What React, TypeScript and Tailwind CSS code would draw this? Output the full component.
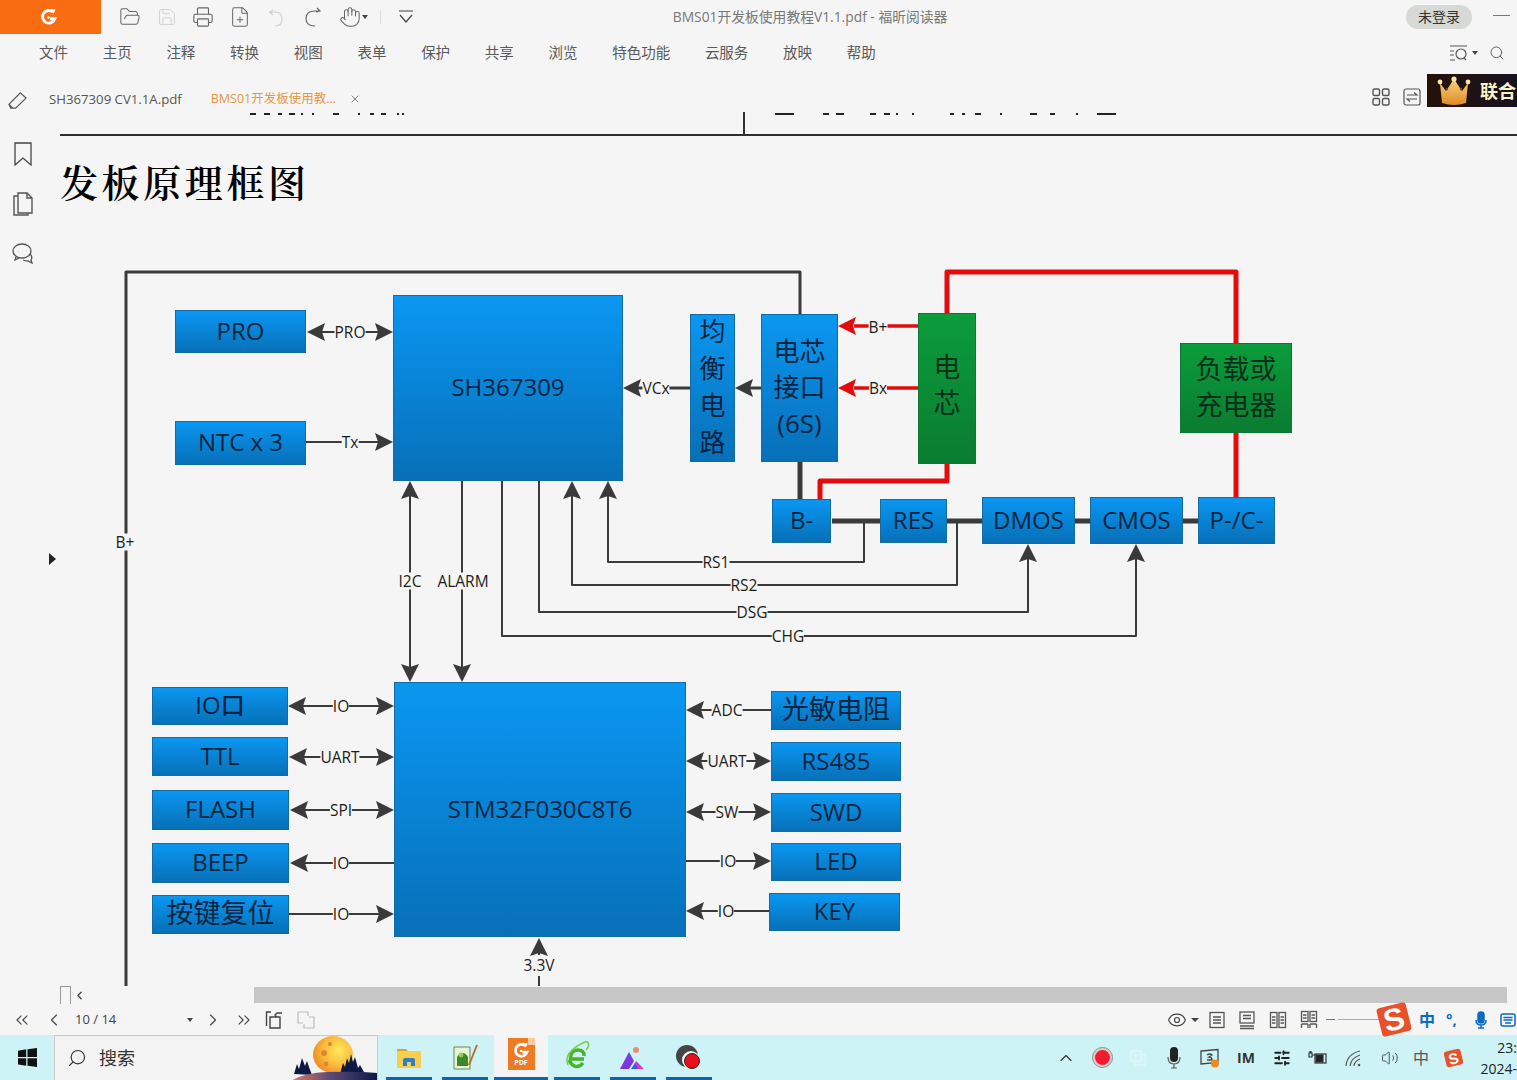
import React from "react";
import {
  FolderOpen, Save, Printer, FilePlus, Hand, ChevronLeft, ChevronRight, ChevronsLeft, ChevronsRight, Eye, ChevronUp, Search, SlidersHorizontal, Volume2, X,
} from "lucide-react";

const FONT = "font-['Open_Sans','Noto_Sans_CJK_SC',sans-serif]";

function Head({ x, y, dir, red }: { x: number; y: number; dir: "l" | "r" | "u" | "d"; red?: boolean }) {
  const rot = { r: 0, d: 90, l: 180, u: 270 }[dir];
  return <polygon points="0,0 -18,-9 -15,0 -18,9" fill={red ? "#e30b0b" : "#3a3a3a"} transform={`translate(${x} ${y}) rotate(${rot})`} />;
}

function L({ d, w = 2, c = "#3a3a3a" }: { d: string; w?: number; c?: string }) {
  return <path d={d} fill="none" stroke={c} strokeWidth={w} strokeLinejoin="round" />;
}

function Wires() {
  return (
    <svg viewBox="46 112 1471 874" className="absolute inset-0 w-[1471px] h-[874px]">
      {/* clipped strokes of the page above */}
      <g fill="#222">
        {[[250, 6], [264, 6], [278, 4], [289, 6], [301, 2], [312, 2], [333, 6], [358, 2], [370, 4], [381, 5], [397, 2], [402, 2], [775, 19], [823, 6], [836, 8], [870, 6], [884, 6], [896, 2], [912, 2], [950, 4], [962, 3], [975, 6], [1000, 2], [1030, 7], [1050, 5], [1076, 2], [1097, 19]].map(([x, w]) => (
          <rect key={x} x={x} y={113} width={w} height={2} />
        ))}
      </g>
      <L d="M60 135H1517" w={2} c="#2e2e2e" />
      <L d="M744 112V135" w={2} c="#2e2e2e" />

      {/* supply loop */}
      <L d="M126 986V272H800V314" w={3} />
      <L d="M800 462V499" w={5} />
      <L d="M832 521H880M947 521H982M1075 521H1090M1183 521H1198" w={5} />

      {/* red power */}
      <L d="M947 313V272H1236V343" w={5} c="#e30b0b" />
      <L d="M1236 433V497" w={5} c="#e30b0b" />
      <L d="M947 464V481H820V499" w={5} c="#e30b0b" />
      <L d="M854 326H918M854 388H918" w={3.5} c="#e30b0b" />
      <Head x={838} y={326} dir="l" red />
      <Head x={838} y={388} dir="l" red />

      {/* balance */}
      <L d="M636 388H690M750 388H761" w={3} />
      <Head x={623} y={388} dir="l" />
      <Head x={735} y={388} dir="l" />

      {/* SH367309 left */}
      <L d="M320 332H380" />
      <Head x={307} y={332} dir="l" />
      <Head x={393} y={332} dir="r" />
      <L d="M306 442H380" />
      <Head x={393} y={442} dir="r" />

      {/* sense lines */}
      <L d="M864 521V562H608V495" />
      <Head x={608} y={481} dir="u" />
      <L d="M957 521V585H572V495" />
      <Head x={572} y={481} dir="u" />
      <L d="M539 481V612H1028V558" />
      <Head x={1028} y={544} dir="u" />
      <L d="M502 481V636H1136V558" />
      <Head x={1136} y={544} dir="u" />

      {/* buses */}
      <L d="M410 495V668" />
      <Head x={410} y={481} dir="u" />
      <Head x={410} y={682} dir="d" />
      <L d="M462 481V668" />
      <Head x={462} y={682} dir="d" />

      {/* STM32 left */}
      <L d="M302 706H380" />
      <Head x={288} y={706} dir="l" />
      <Head x={394} y={706} dir="r" />
      <L d="M302 757H380" />
      <Head x={289} y={757} dir="l" />
      <Head x={394} y={757} dir="r" />
      <L d="M302 810H380" />
      <Head x={290} y={810} dir="l" />
      <Head x={394} y={810} dir="r" />
      <L d="M302 863H394" />
      <Head x={290} y={863} dir="l" />
      <L d="M289 914H380" />
      <Head x={394} y={914} dir="r" />

      {/* STM32 right */}
      <L d="M700 710H771" />
      <Head x={686} y={710} dir="l" />
      <L d="M700 761H757" />
      <Head x={686} y={761} dir="l" />
      <Head x={771} y={761} dir="r" />
      <L d="M700 812H757" />
      <Head x={686} y={812} dir="l" />
      <Head x={771} y={812} dir="r" />
      <L d="M686 861H757" />
      <Head x={771} y={861} dir="r" />
      <L d="M700 911H769" />
      <Head x={686} y={911} dir="l" />

      {/* 3.3V */}
      <Head x={539} y={938} dir="u" />
      <L d="M539 950V955M539 976V986" />
    </svg>
  );
}

function Tag({ className, children }: { className: string; children: React.ReactNode }) {
  return (
    <span className={`absolute -translate-x-1/2 -translate-y-1/2 bg-[#f5f5f5] text-[15.5px] leading-[17px] text-[#1c1c1c] whitespace-nowrap ${className}`}>
      {children}
    </span>
  );
}

const BOX = "absolute flex items-center justify-center text-center pb-[2px] whitespace-nowrap";
const BLUE = `${BOX} border border-[#136ba3] bg-gradient-to-b from-[#0a97f2] to-[#0770b8] text-[#072540]`;
const GREEN = `${BOX} border border-[#0c7a34] bg-gradient-to-b from-[#0b9c3c] to-[#0a7c30] text-[#06301a]`;

function Diagram() {
  return (
    <div className="relative flex-1 min-w-0 overflow-hidden">
      <Wires />
      <h1 className="absolute left-[14px] top-[46px] text-[38px] leading-[46px] tracking-[3.6px] font-semibold text-black whitespace-nowrap font-['Noto_Serif_CJK_SC','Noto_Sans_CJK_SC',serif]">发板原理框图</h1>
      <span className="absolute left-[3px] top-[441px] border-y-[6px] border-l-[7px] border-y-transparent border-l-[#222]" />

      <div className={`${BLUE} font-medium left-[129px] top-[198px] w-[131px] h-[43px] text-[24px]`}>PRO</div>
      <div className={`${BLUE} font-medium left-[129px] top-[309px] w-[131px] h-[44px] text-[24px]`}>NTC x 3</div>
      <div className={`${BLUE} font-medium left-[347px] top-[183px] w-[230px] h-[186px] text-[24px]`}>SH367309</div>
      <div className={`${BLUE} left-[644px] top-[202px] w-[45px] h-[148px] text-[26px] leading-[37px] flex-col`}>
        <span>均</span><span>衡</span><span>电</span><span>路</span>
      </div>
      <div className={`${BLUE} left-[715px] top-[202px] w-[77px] h-[148px] text-[26px] leading-[36px] flex-col`}>
        <span>电芯</span><span>接口</span><span>(6S)</span>
      </div>
      <div className={`${GREEN} left-[872px] top-[201px] w-[58px] h-[151px] text-[27px] leading-[36px] flex-col pb-[8px]`}>
        <span>电</span><span>芯</span>
      </div>
      <div className={`${GREEN} left-[1134px] top-[231px] w-[112px] h-[90px] text-[27px] leading-[36px] flex-col`}>
        <span>负载或</span><span>充电器</span>
      </div>
      <div className={`${BLUE} font-medium left-[726px] top-[387px] w-[59px] h-[44px] text-[24px]`}>B-</div>
      <div className={`${BLUE} font-medium left-[834px] top-[387px] w-[67px] h-[44px] text-[24px]`}>RES</div>
      <div className={`${BLUE} font-medium left-[936px] top-[385px] w-[93px] h-[47px] text-[24px]`}>DMOS</div>
      <div className={`${BLUE} font-medium left-[1044px] top-[385px] w-[93px] h-[47px] text-[24px]`}>CMOS</div>
      <div className={`${BLUE} font-medium left-[1152px] top-[385px] w-[77px] h-[47px] text-[24px]`}>P-/C-</div>
      <div className={`${BLUE} font-medium left-[348px] top-[570px] w-[292px] h-[255px] text-[24px]`}>STM32F030C8T6</div>

      <div className={`${BLUE} font-medium left-[106px] top-[575px] w-[136px] h-[38px] text-[24px]`}>IO口</div>
      <div className={`${BLUE} font-medium left-[106px] top-[625px] w-[136px] h-[39px] text-[24px]`}>TTL</div>
      <div className={`${BLUE} font-medium left-[106px] top-[678px] w-[137px] h-[40px] text-[24px]`}>FLASH</div>
      <div className={`${BLUE} font-medium left-[106px] top-[731px] w-[137px] h-[40px] text-[24px]`}>BEEP</div>
      <div className={`${BLUE} left-[106px] top-[783px] w-[137px] h-[39px] text-[27px]`}>按键复位</div>
      <div className={`${BLUE} left-[725px] top-[579px] w-[130px] h-[39px] text-[27px]`}>光敏电阻</div>
      <div className={`${BLUE} font-medium left-[725px] top-[630px] w-[130px] h-[39px] text-[24px]`}>RS485</div>
      <div className={`${BLUE} font-medium left-[725px] top-[681px] w-[130px] h-[39px] text-[24px]`}>SWD</div>
      <div className={`${BLUE} font-medium left-[725px] top-[731px] w-[130px] h-[38px] text-[24px]`}>LED</div>
      <div className={`${BLUE} font-medium left-[723px] top-[781px] w-[131px] h-[38px] text-[24px]`}>KEY</div>

      <Tag className="left-[79px] top-[430px]">B+</Tag>
      <Tag className="left-[304px] top-[220px]">PRO</Tag>
      <Tag className="left-[304px] top-[330px]">Tx</Tag>
      <Tag className="left-[610px] top-[276px]">VCx</Tag>
      <Tag className="left-[832px] top-[215px]">B+</Tag>
      <Tag className="left-[832px] top-[276px]">Bx</Tag>
      <Tag className="left-[670px] top-[450px]">RS1</Tag>
      <Tag className="left-[698px] top-[473px]">RS2</Tag>
      <Tag className="left-[706px] top-[500px]">DSG</Tag>
      <Tag className="left-[742px] top-[524px]">CHG</Tag>
      <Tag className="left-[364px] top-[469px]">I2C</Tag>
      <Tag className="left-[417px] top-[469px]">ALARM</Tag>
      <Tag className="left-[295px] top-[594px]">IO</Tag>
      <Tag className="left-[294px] top-[645px]">UART</Tag>
      <Tag className="left-[295px] top-[698px]">SPI</Tag>
      <Tag className="left-[295px] top-[751px]">IO</Tag>
      <Tag className="left-[295px] top-[802px]">IO</Tag>
      <Tag className="left-[681px] top-[598px]">ADC</Tag>
      <Tag className="left-[681px] top-[649px]">UART</Tag>
      <Tag className="left-[681px] top-[700px]">SW</Tag>
      <Tag className="left-[682px] top-[749px]">IO</Tag>
      <Tag className="left-[680px] top-[799px]">IO</Tag>
      <Tag className="left-[493px] top-[853px]">3.3V</Tag>
    </div>
  );
}

function FoxitLogo({ className }: { className: string }) {
  return (
    <svg viewBox="0 0 20 20" className={className}>
      <path d="M14.5 4.5A7 7 0 1 0 16.5 12H11" fill="none" stroke="#fff" strokeWidth="3.2" />
      <path d="M11 1l6.5 .5-2.5 5z" fill="#fff" />
      <circle cx="9.5" cy="10.5" r="1.4" fill="#fff" />
    </svg>
  );
}

function Crown() {
  return (
    <svg viewBox="0 0 34 30" className="w-[34px] h-[30px]">
      <defs>
        <linearGradient id="cr" x1="0" y1="0" x2="0" y2="1">
          <stop offset="0" stopColor="#f8d27a" />
          <stop offset="1" stopColor="#e08a28" />
        </linearGradient>
      </defs>
      <path d="M3 7l6 8 8-12 8 12 6-8-2 20Q17 31 5 27z" fill="url(#cr)" />
      <circle cx="3" cy="6" r="2.4" fill="#fbe3a8" />
      <circle cx="17" cy="3" r="2.6" fill="#fbe3a8" />
      <circle cx="31" cy="6" r="2.4" fill="#fbe3a8" />
      <circle cx="10" cy="13" r="1.2" fill="#7a4a14" />
      <circle cx="24" cy="13" r="1.2" fill="#7a4a14" />
    </svg>
  );
}

function Sogou({ className }: { className: string }) {
  return (
    <span className={`flex items-center justify-center rounded-[3px] -rotate-[14deg] bg-[#e8512a] text-white font-black leading-none font-['Liberation_Sans',sans-serif] ${className}`}>S</span>
  );
}

function PageIcon({ kind }: { kind: number }) {
  return (
    <svg viewBox="0 0 20 20" className="w-5 h-5" fill="none" stroke="#555" strokeWidth="1.3">
      {kind === 0 && <><rect x="3" y="2.5" width="14" height="15" /><path d="M6 7h8M6 10h8M6 13h8" /></>}
      {kind === 1 && <><rect x="3" y="2" width="14" height="11" /><path d="M6 5.5h8M6 8.5h8M3 16h14M3 18.5h14" /></>}
      {kind === 2 && <><rect x="2.5" y="2.5" width="6.5" height="15" /><rect x="11" y="2.5" width="6.5" height="15" /><path d="M4 7h3.5M4 10h3.5M4 13h3.5M12.5 7H16M12.5 10H16M12.5 13H16" /></>}
      {kind === 3 && <><rect x="2.5" y="1.5" width="6.5" height="10" /><rect x="11" y="1.5" width="6.5" height="10" /><path d="M4 5h3.5M4 8h3.5M12.5 5H16M12.5 8H16M2.5 14h6.5M11 14h6.5M2.5 14v4M9 14v4M11 14v4M17.5 14v4" /></>}
    </svg>
  );
}

function TitleBar() {
  const ic = "w-[22px] h-[22px] shrink-0 text-[#666]";
  return (
    <div className="h-[34px] flex items-start shrink-0">
      <div className="w-[101px] h-[34px] bg-[#f96c12] flex items-center justify-center pr-[3px]"><FoxitLogo className="w-[18px] h-[18px]" /></div>
      <div className="flex items-center gap-[14.6px] pl-[18px] h-[34px]">
        <FolderOpen className={ic} strokeWidth={1.1} />
        <Save className="w-[20px] h-[20px] shrink-0 mx-[1px] text-[#d0d0d0]" strokeWidth={1.1} />
        <Printer className={ic} strokeWidth={1.2} />
        <FilePlus className={ic} strokeWidth={1.1} />
        <svg viewBox="0 0 22 22" className="w-[22px] h-[22px] shrink-0" fill="none" stroke="#d0d0d0" strokeWidth="1.2"><path d="M8 4L4.5 6 8 9M5 6h5q7 0 7 7t-7 7" /></svg>
        <svg viewBox="0 0 22 22" className="w-[22px] h-[22px] shrink-0" fill="none" stroke="#666" strokeWidth="1.2"><path d="M15 2l3 3-4 1M18 5h-5Q4 5 4 12.500T13 20" /></svg>
        <span className="flex items-center w-[22px]">
          <Hand className={ic} strokeWidth={1.1} />
          <span className="shrink-0 ml-[1px] border-x-[3.5px] border-t-[4px] border-x-transparent border-t-[#444]" />
        </span>
        <span className="w-px h-[14px] bg-[#ddd] ml-[5px]" />
        <svg viewBox="0 0 16 16" className="w-[16px] h-[16px] shrink-0 ml-[2px]" fill="none" stroke="#444" strokeWidth="1.2"><path d="M1 2h14M2 6l6 7 6-7" /></svg>
      </div>
      <div className="h-[34px] ml-[259px] flex items-center text-[13.8px] text-[#777] whitespace-nowrap">BMS01开发板使用教程V1.1.pdf - 福昕阅读器</div>
      <div className="ml-auto mt-[5px] w-[66px] h-[24px] pb-[2px] rounded-full bg-[#d6d9d6] flex items-center justify-center text-[14px] text-[#333]">未登录</div>
      <div className="ml-[21px] mr-[7px] mt-[15px] w-[17px] h-px bg-[#777]" />
    </div>
  );
}

function MenuBar() {
  const items = ["文件", "主页", "注释", "转换", "视图", "表单", "保护", "共享", "浏览", "特色功能", "云服务", "放映", "帮助"];
  return (
    <div className="h-[38px] shrink-0 flex items-center pl-[39px] pb-[1px] gap-[34.7px] text-[14.5px] text-[#5a5a5a]">
      {items.map((t) => <span key={t} className="whitespace-nowrap">{t}</span>)}
      <span className="ml-auto flex items-center text-[#555]">
        <svg viewBox="0 0 20 18" className="w-[20px] h-[18px]" fill="none" stroke="#555" strokeWidth="1.2">
          <path d="M1 2h17M1 7h4M1 11h4M1 16h5" /><circle cx="12" cy="10" r="5" /><path d="M15 14l2 2" />
        </svg>
        <span className="ml-[3px] border-x-[3.5px] border-t-[4px] border-x-transparent border-t-[#444]" />
        <Search className="ml-[11px] mr-[12px] w-[16px] h-[16px]" strokeWidth={1.4} />
      </span>
    </div>
  );
}

function TabBar() {
  return (
    <div className="h-[40px] shrink-0 flex items-start">
      <svg viewBox="0 0 20 20" className="ml-[8px] mt-[19px] w-[19px] h-[19px] shrink-0" fill="none" stroke="#555" strokeWidth="1.3">
        <path d="M13 2l6 5.500L8 18H3l-2-4zM1 14l4 4" />
      </svg>
      <span className="ml-[22px] mt-[18px] text-[13.2px] leading-[18px] text-[#555] whitespace-nowrap">SH367309 CV1.1A.pdf</span>
      <span className="ml-[29px] mt-[18px] text-[12.5px] leading-[18px] text-[#e8973f] whitespace-nowrap">BMS01开发板使用教...</span>
      <X className="ml-[13px] mt-[21px] w-[12px] h-[12px] text-[#555]" strokeWidth={1.5} />
      <span className="ml-auto mt-[16px] flex items-center">
        <svg viewBox="0 0 18 18" className="w-[18px] h-[18px]" fill="none" stroke="#555" strokeWidth="1.4">
          <rect x="1" y="1" width="6.5" height="6.5" rx="1.5" /><rect x="10.5" y="1" width="6.5" height="6.5" rx="1.5" />
          <rect x="1" y="10.5" width="6.5" height="6.5" rx="1.5" /><rect x="10.5" y="10.5" width="6.5" height="6.5" rx="1.5" />
        </svg>
        <svg viewBox="0 0 18 18" className="ml-[13px] w-[18px] h-[18px]" fill="none" stroke="#555" strokeWidth="1.2">
          <rect x="1" y="1" width="16" height="16" rx="2" /><path d="M4 7h10l-3-2.500M14 11H4l3 2.500" />
        </svg>
      </span>
      <div className="ml-[6px] mt-[2px] w-[90px] h-[33px] bg-gradient-to-r from-[#241208] to-[#17111f] flex items-center overflow-hidden">
        <span className="ml-[10px] shrink-0 flex"><Crown /></span>
        <span className="ml-[9px] text-[18px] leading-[18px] font-bold text-[#fbf3c8] whitespace-nowrap">联合</span>
      </div>
    </div>
  );
}

function SideBar() {
  return (
    <div className="w-[46px] shrink-0 flex flex-col items-center gap-[26px] pt-[30px] pr-[1px]">
      <svg viewBox="0 0 18 24" className="w-[18px] h-[24px] shrink-0" fill="none" stroke="#444" strokeWidth="1.3"><path d="M1 1h16v22l-8-7-8 7z" /></svg>
      <svg viewBox="0 0 20 24" className="w-[20px] h-[24px] shrink-0" fill="none" stroke="#555" strokeWidth="1.4">
        <path d="M5 1h9l5 5v15H5zM5 4H1v19h14v-2M14 1v5h5" />
      </svg>
      <svg viewBox="0 0 22 22" className="w-[22px] h-[22px] shrink-0" fill="none" stroke="#555" strokeWidth="1.3">
        <ellipse cx="10" cy="9" rx="9" ry="7" /><path d="M6 9h.1M10 9h.1M14 9h.1" strokeWidth="2" /><path d="M4 15l-1 3 4-2M18 12q3 3 1 6l1 3-4-2q-3 0-5-1" />
      </svg>
    </div>
  );
}

function ScrollRow() {
  return (
    <div className="h-[18px] shrink-0 flex items-start">
      <span className="ml-[60px] w-[11px] h-[18px] border-x border-t border-[#999]" />
      <ChevronLeft className="ml-[2px] mt-[3px] w-[13px] h-[13px] text-[#444]" strokeWidth={2.6} />
      <div className="ml-[168px] mt-[1px] w-[1253px] h-[16px] bg-[#c6c6c6]" />
    </div>
  );
}

function StatusRow() {
  const ic = "w-5 h-5 shrink-0 text-[#444]";
  return (
    <div className="relative h-[31px] shrink-0 flex items-center">
      <ChevronsLeft className={`${ic} ml-[12px]`} strokeWidth={1.3} />
      <ChevronLeft className={`${ic} ml-[12px]`} strokeWidth={1.4} />
      <span className="ml-[11px] w-[109px] text-[13px] text-[#444]">10 / 14</span>
      <span className="w-[12px] flex justify-center"><span className="border-x-[3.5px] border-t-[4px] border-x-transparent border-t-[#444]" /></span>
      <ChevronRight className={`${ic} ml-[7px]`} strokeWidth={1.4} />
      <ChevronsRight className={`${ic} ml-[11px]`} strokeWidth={1.3} />
      <svg viewBox="0 0 20 20" className="ml-[11px] w-5 h-5" fill="none" stroke="#444" strokeWidth="1.4">
        <path d="M6 2H1.500v14M5 7h10v11H5zM17 3h-5l-2 2 2 2" />
      </svg>
      <svg viewBox="0 0 20 20" className="ml-[11px] w-5 h-5" fill="none" stroke="#bbb" strokeWidth="1.2">
        <path d="M2 2h10v4M18 18H8v-4M2 2v11h5M18 18V7h-5" />
      </svg>
      <Eye className="ml-[851px] w-5 h-5 shrink-0 text-[#444]" strokeWidth={1.4} />
      <span className="ml-[4px] border-x-[4px] border-t-[4px] border-x-transparent border-t-[#444]" />
      <span className="ml-[8px] flex"><PageIcon kind={0} /></span>
      <span className="ml-[10px] flex"><PageIcon kind={1} /></span>
      <span className="ml-[11px] flex"><PageIcon kind={2} /></span>
      <span className="ml-[11px] flex"><PageIcon kind={3} /></span>
      <span className="ml-[7px] w-[9px] h-px bg-[#777]" />
      <span className="ml-[3px] w-[42px] h-px bg-[#aaa]" />
      <Sogou className="absolute left-[1379px] top-[1px] w-[30px] h-[29px] text-[31px] z-10" />
      <span className="ml-[39px] w-[16px] text-[16px] font-bold text-[#0a6cc4] leading-none">中</span>
      <span className="ml-[11px] w-4 text-[15px] font-bold text-[#0a6cc4] leading-none whitespace-nowrap">°,</span>
      <svg viewBox="0 0 16 18" className="ml-[11px] w-4 h-[18px] shrink-0" fill="none" stroke="#0a6cc4" strokeWidth="1.5">
        <rect x="5" y="1" width="6" height="11" rx="3" fill="#0a6cc4" /><path d="M3 9q0 5 5 5t5-5M8 14v3M5 17h6" />
      </svg>
      <svg viewBox="0 0 16 14" className="ml-[11px] w-4 h-[14px] shrink-0" fill="none" stroke="#0a6cc4" strokeWidth="1.5">
        <rect x="1" y="1" width="14" height="12" rx="2" /><path d="M3.500 4.500h9M3.500 7h9M5 10h6" />
      </svg>
    </div>
  );
}

function Moon() {
  return (
    <svg viewBox="0 0 100 45" className="ml-auto w-[100px] h-[45px] shrink-0">
      <defs>
        <radialGradient id="mn" cx="0.65" cy="0.4" r="0.75">
          <stop offset="0" stopColor="#ffe95a" />
          <stop offset="0.55" stopColor="#fbb83c" />
          <stop offset="1" stopColor="#e87f20" />
        </radialGradient>
        <linearGradient id="hl" x1="0" y1="0" x2="1" y2="0">
          <stop offset="0" stopColor="#e67a5a" />
          <stop offset="0.45" stopColor="#5b4a78" />
          <stop offset="1" stopColor="#0c1a45" />
        </linearGradient>
      </defs>
      <ellipse cx="56" cy="18.500" rx="20" ry="18.500" fill="url(#mn)" />
      <circle cx="47" cy="17" r="3" fill="#d98a2c" /><circle cx="53" cy="8" r="2" fill="#d98a2c" /><circle cx="49" cy="28" r="2.400" fill="#d98a2c" />
      <path d="M17 38l3-10 2 5 3-11 3 8 2-5 2 6 3 8zM63 38l3-11 2 4 2-9 2 5 2-9 2 8 2-5 3 11 2-3 4 7z" fill="#0d1a45" />
      <path d="M14 45Q26 37 50 36Q80 35 100 37V45z" fill="url(#hl)" />
    </svg>
  );
}

function Taskbar() {
  const under = "h-[3px] w-[46px] bg-[#0a66ad]";
  const app = "w-[46px] h-[45px] flex flex-col items-center justify-between";
  return (
    <div className="h-[45px] shrink-0 bg-[#cdf3f6] flex overflow-hidden">
      <div className="w-[54px] shrink-0 flex items-center justify-center">
        <svg viewBox="0 0 18 18" className="w-[19px] h-[19px]" fill="#111">
          <path d="M0 2.500L7.800 1.300V8.600H0zM9 1.100L18 0V8.600H9zM0 9.800H7.800V16.700L0 15.600zM9 9.800H18V18L9 16.900z" />
        </svg>
      </div>
      <div className="w-[324px] shrink-0 bg-[#f3f3f3] border border-b-0 border-[#c9c9c9] flex items-center overflow-hidden">
        <Search className="ml-[12px] w-[20px] h-[20px] -scale-x-100 text-[#333] shrink-0" strokeWidth={1.4} />
        <span className="ml-[12px] text-[18px] text-[#333] whitespace-nowrap">搜索</span>
        <Moon />
      </div>
      <div className="w-[670px] shrink-0 flex gap-[10px] pl-[8px]">
        <div className={app}>
          <svg viewBox="0 0 26 24" className="mt-[11px] w-[26px] h-[24px]">
            <path d="M1 3h9l2 2h13v17H1z" fill="#f7cf4a" /><path d="M1 3h9l1.500 2H1z" fill="#e0a030" />
            <path d="M7 20v-6q0-2 2-2h8q2 0 2 2v6h-4v-4h-4v4z" fill="#2f7fc8" />
          </svg>
          <span className={under} />
        </div>
        <div className={app}>
          <svg viewBox="0 0 26 28" className="mt-[8px] w-[26px] h-[28px]">
            <path d="M2 4h16v22H2z" fill="#e8f3d8" stroke="#6a8a50" /><path d="M5 14q6-8 11 0v9H5z" fill="#3b8a2a" />
            <circle cx="9" cy="12" r="2.400" fill="#9ad04a" /><path d="M17 22L25 2" stroke="#b5762a" strokeWidth="2" />
          </svg>
          <span className={under} />
        </div>
        <div className="-mx-[4px] w-[54px] h-[45px] bg-[#f4f4f4] flex flex-col items-center justify-between">
          <div className="relative mt-[3px] w-[27px] h-[32px] bg-[#ee7a22] flex flex-col items-center pt-[4px]">
            <FoxitLogo className="w-[17px] h-[17px]" />
            <span className="text-[7px] leading-[8px] font-bold text-white">PDF</span>
            <span className="absolute right-0 top-0 w-[7px] h-[7px] bg-[#f9c9a0]" />
          </div>
          <span className="h-[3px] w-[54px] bg-[#0a66ad]" />
        </div>
        <div className={app}>
          <svg viewBox="0 0 26 30" className="mt-[6px] w-[26px] h-[30px]" fill="none">
            <path d="M20 18H6.500q0-9 7-9t6.500 6M19 22q-3 4-7 3.500T5 19" stroke="#49b52b" strokeWidth="3.600" />
            <path d="M4 24Q0 14 12 6T24 2q2 3-2 7" stroke="#7ed04a" strokeWidth="1.600" />
          </svg>
          <span className={under} />
        </div>
        <div className={app}>
          <svg viewBox="0 0 28 26" className="mt-[10px] w-[28px] h-[26px]">
            <circle cx="17" cy="5" r="3" fill="#f08a70" />
            <path d="M1 24L10 7l5 9-5 8z" fill="#7a3ae0" /><path d="M13 24l4-8 8 8z" fill="#d03ac8" /><path d="M12 24l4-6 3 6z" fill="#3a5ae8" />
          </svg>
          <span className={under} />
        </div>
        <div className={app}>
          <svg viewBox="0 0 30 30" className="mt-[8px] w-[30px] h-[30px]">
            <circle cx="13" cy="13" r="11" fill="#444" /><circle cx="17" cy="17" r="9" fill="#f5f5f5" />
            <circle cx="18" cy="18" r="7.500" fill="#e8101c" stroke="#222" strokeWidth="1" />
          </svg>
          <span className={under} />
        </div>
      </div>
      <div className="flex shrink-0 items-center text-[#333]">
        <span className="w-9 flex justify-center"><ChevronUp className="w-5 h-5" strokeWidth={1.4} /></span>
        <span className="w-9 flex justify-center"><span className="w-[19px] h-[19px] rounded-full bg-[#ee1c2e] border-2 border-[#e9c6c6] outline outline-1 outline-[#8a8a8a]" /></span>
        <span className="w-9 flex justify-center">
          <svg viewBox="0 0 16 16" className="w-4 h-4" fill="none" stroke="#e2f6f7" strokeWidth="1.400"><rect x="1" y="1" width="10" height="10" /><rect x="5" y="5" width="10" height="10" /></svg>
        </span>
        <span className="w-9 flex justify-center">
          <svg viewBox="0 0 14 22" className="w-[14px] h-[22px]"><rect x="3" y="0" width="8" height="15" rx="4" fill="#222" /><path d="M1 10q0 7 6 7t6-7M7 17v4M4 21h6" fill="none" stroke="#555" strokeWidth="1.200" /></svg>
        </span>
        <span className="w-9 flex justify-center">
          <svg viewBox="0 0 20 20" className="w-5 h-5" fill="none" stroke="#444" strokeWidth="1.300">
            <path d="M1 3l17-1.500v13L1 16zM7 7q3-2 5 0l-3 2q3 0 3 3H7" /><circle cx="15" cy="15.500" r="4" fill="#f08a1c" stroke="none" />
          </svg>
        </span>
        <span className="w-9 flex justify-center text-[14px] font-bold leading-none text-[#333]">IM</span>
        <span className="w-9 flex justify-center"><SlidersHorizontal className="w-[18px] h-[18px] text-[#222]" strokeWidth={2.4} /></span>
        <span className="w-9 flex justify-center">
          <svg viewBox="0 0 20 14" className="w-5 h-[14px]" fill="none" stroke="#333" strokeWidth="1.200">
            <rect x="7" y="3" width="11" height="9" /><rect x="8" y="4" width="7" height="7" fill="#222" /><path d="M1 2h3v4H1zM4 4h3M2 0v2M3 0v2" />
          </svg>
        </span>
        <span className="w-9 flex justify-center">
          <svg viewBox="0 0 18 18" className="w-[18px] h-[18px]" fill="none" stroke="#555" strokeWidth="1.200">
            <path d="M1 17Q2 5 15 2M5 17Q6 9 15 6M9 17Q9.500 12 15 10" /><circle cx="14" cy="16" r="1.300" fill="#555" stroke="none" />
          </svg>
        </span>
        <span className="w-9 flex justify-center"><Volume2 className="w-[18px] h-[18px] text-[#444]" strokeWidth={1.2} /></span>
        <span className="w-[26px] text-center text-[16px] text-[#555] leading-none">中</span>
        <span className="w-[38px] flex justify-center"><Sogou className="w-[17px] h-[16px] text-[15px]" /></span>
        <div className="ml-[6px] w-[39px] shrink-0 text-right text-[14px] leading-[21px] text-[#222] whitespace-nowrap">
          <div>23:</div>
          <div>2024-</div>
        </div>
      </div>
    </div>
  );
}

export default function App() {
  return (
    <div className={`w-[1517px] h-[1080px] bg-[#f5f5f5] flex flex-col overflow-hidden ${FONT}`}>
      <TitleBar />
      <MenuBar />
      <TabBar />
      <div className="flex flex-1 min-h-0">
        <SideBar />
        <Diagram />
      </div>
      <ScrollRow />
      <StatusRow />
      <Taskbar />
    </div>
  );
}
